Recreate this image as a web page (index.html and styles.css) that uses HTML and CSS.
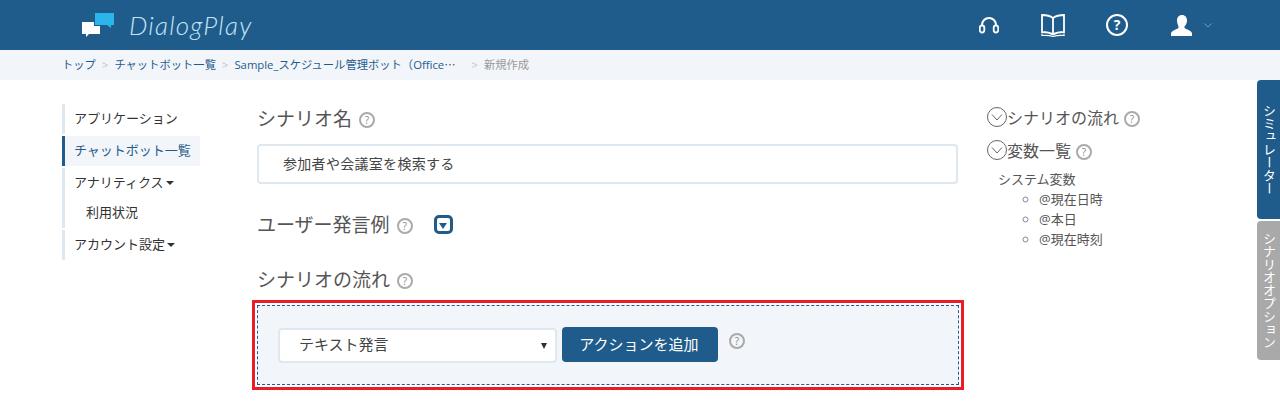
FILE: index.html
```html
<!DOCTYPE html>
<html lang="ja">
<head>
    <meta charset="UTF-8">
    <title>DialogPlay</title>
    <link rel="stylesheet" href="styles.css">
</head>
<body>

    <!-- Header -->
    <header class="header">
        <div class="logo">
            <svg class="logo-mark" width="34" height="26" viewBox="0 0 34 26">
                <path d="M1 10h18v12H8l-3 3v-3H1z" fill="#fff"/>
                <path d="M13 0h20v14h-3v4l-5-4H13z" fill="#1f5c8b"/>
                <path d="M14 1h19v12h-3v3l-4-3H14z" fill="#2bb5ea"/>
            </svg>
            <span class="logo-text">DialogPlay</span>
        </div>
        <nav class="header-icons">
            <svg class="icon-headset" width="20" height="18" viewBox="0 0 20 18">
                <path d="M3 11V9a7 7 0 0 1 14 0v2" fill="none" stroke="#fff" stroke-width="2"/>
                <rect x="0.800" y="9.500" width="4.500" height="7" rx="2.200" fill="#1f5c8b" stroke="#fff" stroke-width="1.800"/>
                <rect x="14.700" y="9.500" width="4.500" height="7" rx="2.200" fill="#1f5c8b" stroke="#fff" stroke-width="1.800"/>
            </svg>
            <svg class="icon-book" width="24" height="23" viewBox="0 0 24 23">
                <path d="M12 4C9 1.800 5 1 1 1v17c4 0 8 .6 11 2.600C15 18.600 19 18 23 18V1c-4 0-8 .8-11 3zM12 4v16.600" fill="none" stroke="#fff" stroke-width="1.800"/>
                <path d="M1 19.500v2c4-.4 8 0 11 1 3-1 7-1.400 11-1v-2" fill="none" stroke="#fff" stroke-width="1.200"/>
            </svg>
            <span class="icon-help">?</span>
            <svg class="icon-user" width="22" height="21" viewBox="0 0 22 21">
                <path d="M11 0c3.200 0 5 2.400 5 5.500 0 2.400-1 4.500-2.400 5.800-.4 1 0 2 1 2.500 2.500 1 5.400 2 6.400 4.200V21H0v-3c1-2.200 3.900-3.200 6.400-4.200 1-.5 1.400-1.500 1-2.500C7 10 6 7.900 6 5.500 6 2.400 7.800 0 11 0z" fill="#fff"/>
            </svg>
            <svg class="icon-chevron" width="8" height="5" viewBox="0 0 8 5">
                <path d="M.5.5 4 4 7.500.5" fill="none" stroke="#7f9db8" stroke-width="1"/>
            </svg>
        </nav>
    </header>

    <!-- Breadcrumb -->
    <div class="breadcrumb">
        <a>トップ</a><span class="sep">&gt;</span>
        <a>チャットボット一覧</a><span class="sep">&gt;</span>
        <a class="crumb-long">Sample_スケジュール管理ボット（Office⋯</a><span class="sep">&gt;</span>
        <span class="crumb-now">新規作成</span>
    </div>

    <div class="content">
        <!-- Side menu -->
        <ul class="side-menu">
            <li class="side-item">アプリケーション</li>
            <li class="side-item active">チャットボット一覧</li>
            <li class="side-item has-sub">
                <div class="side-row">アナリティクス<i class="caret"></i></div>
                <div class="side-row sub">利用状況</div>
            </li>
            <li class="side-item">アカウント設定<i class="caret"></i></li>
        </ul>

        <!-- Main form -->
        <main class="form">
            <h2 class="form-title">シナリオ名<span class="help"></span></h2>
            <input class="name-input" type="text" value="参加者や会議室を検索する">

            <h2 class="form-title example-title">ユーザー発言例<span class="help"></span><span class="toggle"></span></h2>

            <h2 class="form-title flow-title">シナリオの流れ<span class="help"></span></h2>
            <div class="highlight">
                <div class="flow-box">
                    <div class="select-wrap">
                        <select class="action-select">
                            <option>テキスト発言</option>
                        </select>
                    </div>
                    <button class="add-btn">アクションを追加</button>
                    <span class="help flow-help"></span>
                </div>
            </div>
        </main>

        <!-- Right column -->
        <aside class="outline">
            <h3 class="outline-title"><span class="circle-down"><svg width="12" height="7" viewBox="0 0 12 7"><path d="M1 .5 6 6l5-5.500" fill="none" stroke="#666" stroke-width="1"/></svg></span>シナリオの流れ<span class="help"></span></h3>
            <h3 class="outline-title"><span class="circle-down"><svg width="12" height="7" viewBox="0 0 12 7"><path d="M1 .5 6 6l5-5.500" fill="none" stroke="#666" stroke-width="1"/></svg></span>変数一覧<span class="help"></span></h3>
            <div class="var-group">システム変数</div>
            <ul class="var-list">
                <li>@現在日時</li>
                <li>@本日</li>
                <li>@現在時刻</li>
            </ul>
        </aside>
    </div>

    <!-- Side tabs -->
    <div class="side-tabs">
        <div class="side-tab">シミュレーター</div>
        <div class="side-tab gray">シナリオオプション</div>
    </div>

</body>
</html>
```

FILE: styles.css
```css
:root {
    --main-color: #1f5c8b;
    --light-bg: #f2f5f9;
    --line-color: #dfe7ef;
    --text-color: #444;
}

* {
    box-sizing: border-box;
}

html, body {
    height: 100%;
    overflow: hidden;
}

body {
    margin: 0;
    font-family: "Open Sans", "Noto Sans CJK JP", sans-serif;
    color: var(--text-color);
    background: #fff;
}

/* Header */
.header {
    height: 50px;
    background: var(--main-color);
    display: flex;
    justify-content: space-between;
    align-items: center;
    padding: 0 68px 0 81px;
}

.logo {
    display: flex;
    align-items: center;
    gap: 14px;
}

.logo-text {
    font-family: "Lato", sans-serif;
    font-size: 26px;
    font-weight: 300;
    font-style: italic;
    letter-spacing: 1.200px;
    color: #c4e4f7;
}

.header-icons {
    display: flex;
    align-items: center;
}

.icon-headset {
    margin-right: 42px;
}

.icon-book {
    margin-right: 41px;
}

.icon-help {
    width: 22px;
    height: 22px;
    border: 2px solid #fff;
    border-radius: 50%;
    color: #fff;
    font-size: 14px;
    font-weight: 700;
    line-height: 18px;
    text-align: center;
    margin-right: 43px;
}

.icon-user {
    margin-right: 11px;
}

/* Breadcrumb */
.breadcrumb {
    height: 30px;
    background: var(--light-bg);
    display: flex;
    align-items: center;
    padding: 0 0 2px 62px;
    font-size: 11.300px;
    color: var(--main-color);
}

.sep {
    color: #c4c4c4;
    margin: 0 6px;
}

.crumb-long {
    width: 231px;
}

.crumb-now {
    color: #999;
}

/* Layout */
.content {
    display: flex;
    padding: 24px 0 0 62px;
}

/* Side menu */
.side-menu {
    width: 138px;
    margin: 0 57px 0 0;
    padding: 0;
    list-style: none;
    font-size: 13px;
    color: #333;
}

.side-item {
    height: 30px;
    padding-left: 9px;
    border-left: 3px solid var(--line-color);
    margin-bottom: 2px;
    line-height: 28px;
}

.side-item.has-sub {
    height: 60px;
}

.side-row.sub {
    padding-left: 12px;
    margin-top: 2px;
}

.side-item.active {
    background: var(--light-bg);
    border-left-color: var(--main-color);
    color: var(--main-color);
}

.caret {
    display: inline-block;
    margin-left: 2px;
    vertical-align: 2px;
    border-top: 4px solid #333;
    border-left: 4px solid transparent;
    border-right: 4px solid transparent;
}

/* Main form */
.form {
    width: 701px;
    margin-right: 29px;
}

.form-title {
    height: 28px;
    margin: 0;
    display: flex;
    align-items: center;
    font-size: 19px;
    font-weight: 400;
    color: #555;
}

.example-title {
    margin-top: 26px;
}

.flow-title {
    margin-top: 27px;
}

.help {
    width: 16px;
    height: 16px;
    margin-left: 7px;
    margin-top: 3px;
    border: 2px solid #aaa;
    border-radius: 50%;
    display: inline-block;
    flex: none;
    position: relative;
}

.help::after {
    content: "?";
    position: absolute;
    inset: 0;
    font-size: 10px;
    font-weight: 400;
    line-height: 12px;
    text-align: center;
    color: #888;
}

.toggle {
    width: 19px;
    height: 19px;
    margin-left: 21px;
    border: 3px solid var(--main-color);
    border-radius: 5px;
    background: #fff;
    position: relative;
}

.toggle::after {
    content: "";
    position: absolute;
    left: 2px;
    top: 5px;
    border-top: 6px solid var(--main-color);
    border-left: 4.500px solid transparent;
    border-right: 4.500px solid transparent;
}

.name-input {
    display: block;
    width: 100%;
    height: 40px;
    margin-top: 12px;
    padding: 0 24px 2px;
    border: 2px solid var(--line-color);
    border-radius: 4px;
    font-family: inherit;
    font-size: 14px;
    letter-spacing: 0.300px;
    color: var(--text-color);
}

/* Red box around the flow panel */
.highlight {
    margin: 7px -6px 0 -5px;
    padding: 2px;
    border: 3px solid #ed1c24;
}

.flow-box {
    height: 80px;
    padding: 22px 0 0 20px;
    display: flex;
    align-items: flex-start;
    background: var(--light-bg);
    border: 1px dashed var(--main-color);
}

.select-wrap {
    position: relative;
    width: 279px;
    height: 35px;
}

/* the little arrow sits over the select */
.select-wrap::after {
    content: "";
    position: absolute;
    right: 10px;
    top: 15px;
    border-top: 6px solid #333;
    border-left: 3px solid transparent;
    border-right: 3px solid transparent;
}

.action-select {
    width: 100%;
    height: 100%;
    padding: 0 0 3px 19px;
    appearance: none;
    border: 2px solid var(--line-color);
    border-radius: 4px;
    background-color: #fff;
    font-family: inherit;
    font-size: 15px;
    color: var(--text-color);
}

.add-btn {
    width: 156px;
    height: 35px;
    margin-left: 5px;
    margin-top: -1px;
    padding: 0 2px 2px 0;
    border: none;
    border-radius: 4px;
    background: var(--main-color);
    color: #fff;
    font-family: inherit;
    font-size: 15px;
}

.flow-help {
    margin: 5px 0 0 11px;
}

/* Right column */
.outline {
    flex: 1;
    color: #555;
}

.outline-title {
    height: 26px;
    margin: 0 0 7px;
    display: flex;
    align-items: center;
    font-size: 16px;
    font-weight: 400;
}

.outline-title .help {
    margin-left: 5px;
}

.circle-down {
    width: 20px;
    height: 20px;
    margin-right: 0;
    border: 1px solid #666;
    border-radius: 50%;
    display: flex;
    align-items: center;
    justify-content: center;
}

.var-group {
    margin-left: 11px;
    font-size: 13px;
    line-height: 20px;
    margin-top: -1px;
}

.var-list {
    margin: 0;
    padding-left: 52px;
    list-style: circle;
    font-size: 13px;
    line-height: 20px;
}

.var-list li::marker {
    color: #888;
}

/* Side tabs */
.side-tabs {
    position: absolute;
    top: 80px;
    right: 0;
    display: flex;
    flex-direction: column;
    gap: 2px;
}

.side-tab {
    width: 23px;
    height: 139px;
    padding-top: 24px;
    writing-mode: vertical-rl;
    line-height: 23px;
    font-size: 13px;
    color: #fff;
    background: var(--main-color);
    border-radius: 4px 0 0 4px;
}

.side-tab.gray {
    background: #a9a9a9;
    padding-top: 11px;
}
```
